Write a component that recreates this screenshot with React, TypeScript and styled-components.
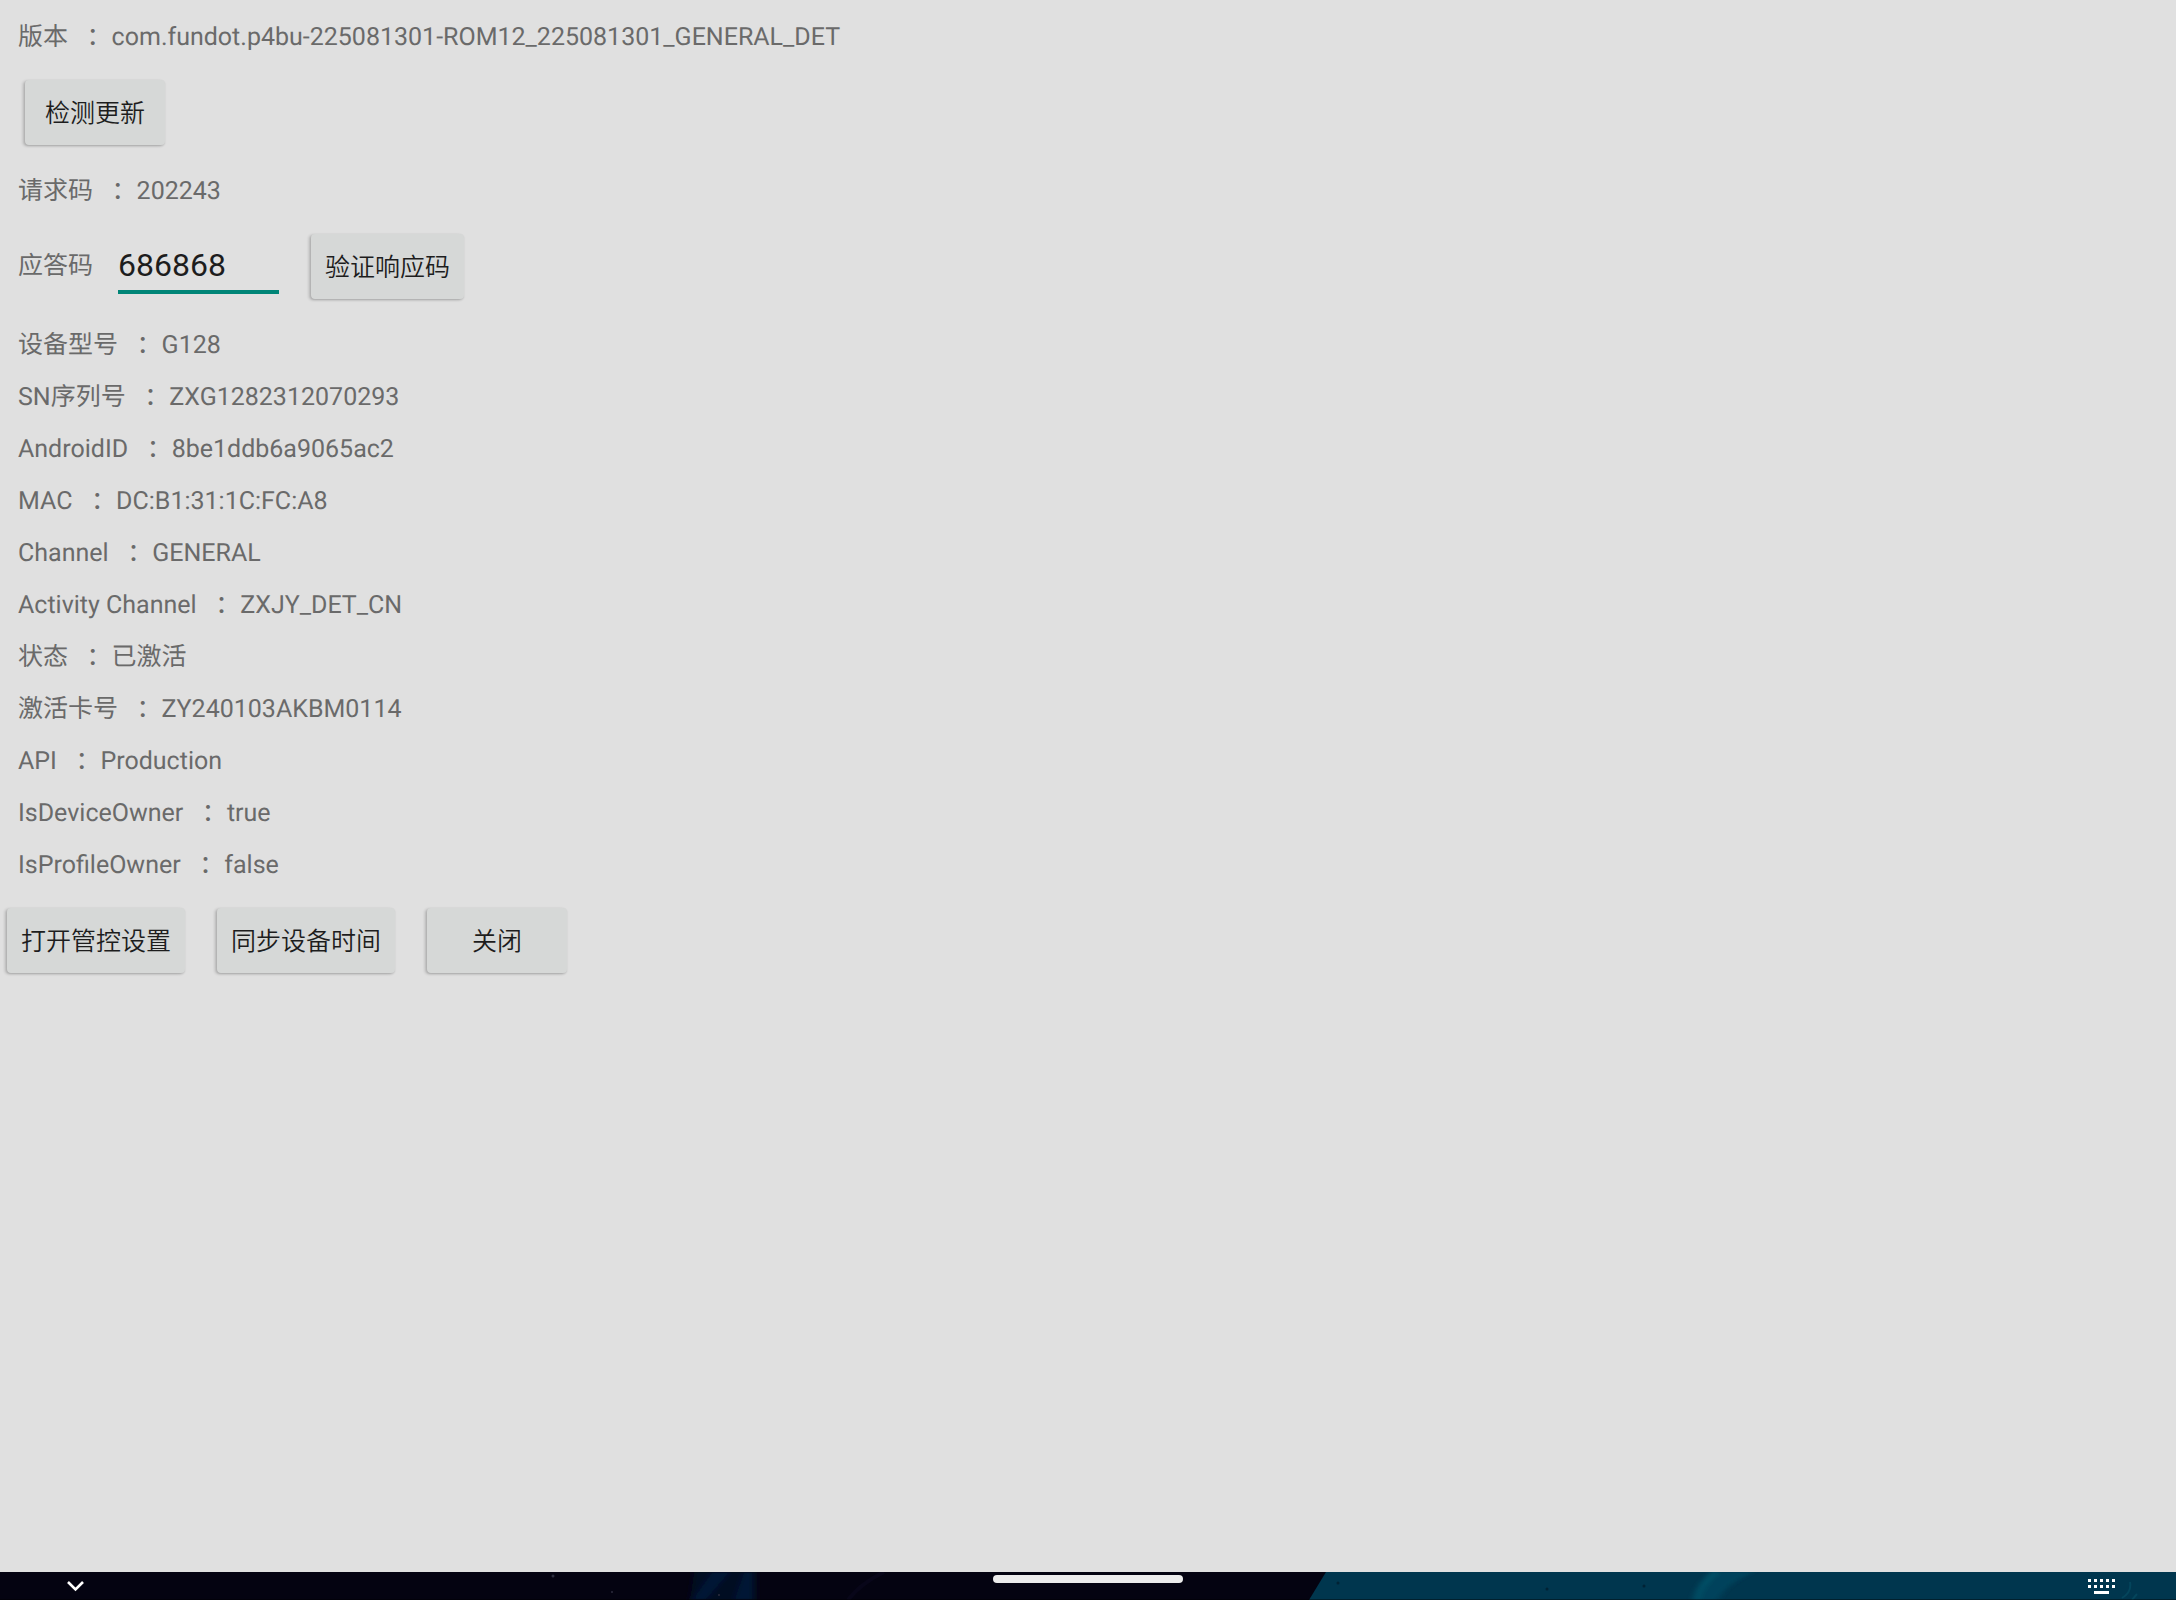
import React, { useState } from 'react';
import styled, { createGlobalStyle } from 'styled-components';

const GlobalStyle = createGlobalStyle`
  *, *::before, *::after { box-sizing: border-box; }
  body {
    margin: 0;
    background: #e0e0e0;
    color: #6a6a6a;
    font-family: Roboto, "Noto Sans CJK SC", sans-serif;
    font-size: 25px;
    line-height: 52px;
    text-rendering: geometricPrecision;
  }
`;

const Screen = styled.div`
  min-height: 100vh;
  display: flex;
  flex-direction: column;
`;

const Content = styled.main`
  flex: 1;
  padding: 12px 0;
`;

const InfoList = styled.dl`
  margin: 0;
  padding: 0 18px;
`;

const InfoRow = styled.div`
  display: flex;
  white-space: pre;
`;

const Term = styled.dt``;

const Value = styled.dd`
  margin: 0;
`;

const ControlRow = styled.div<{ $inset: number }>`
  display: flex;
  align-items: center;
  padding: 16px ${(p) => p.$inset}px 21px;
`;

const ButtonRow = styled(ControlRow)`
  gap: 32px;
`;

const Button = styled.button`
  min-width: 140px;
  height: 65px;
  padding: 2px 14px 0;
  border: 0;
  border-radius: 4px;
  background: #d6d8d7;
  color: #1d1d1d;
  font: inherit;
  font-weight: 350;
  line-height: 32px;
  box-shadow: -2px 1px 3px rgba(0, 0, 0, 0.2), 0 1px 2px rgba(0, 0, 0, 0.1);
  cursor: pointer;
`;

const CodeInput = styled.input`
  width: 161px;
  height: 55px;
  margin: 0 32px 0 25px;
  padding: 0;
  border: 0;
  border-bottom: 4px solid #008577;
  border-radius: 0;
  outline: 0;
  background: transparent;
  color: #1d1d1d;
  font: inherit;
  font-size: 32px;
  line-height: 40px;
`;

const NavBar = styled.nav`
  position: relative;
  display: grid;
  grid-template-columns: 1fr auto 1fr;
  height: 28px;
  padding: 0 60px;
  background: #040311;
`;

const Wallpaper = styled.svg`
  position: absolute;
  inset: 0;
  width: 100%;
  height: 100%;
`;

const NavButton = styled.button<{ $side: 'start' | 'end' }>`
  position: relative;
  justify-self: ${(p) => p.$side};
  display: flex;
  height: 28px;
  padding: 0;
  border: 0;
  background: transparent;
  color: #fff;
  cursor: pointer;
`;

const HomeHandle = styled.button`
  position: relative;
  width: 190px;
  height: 8px;
  margin-top: 3px;
  padding: 0;
  border: 0;
  border-radius: 4px;
  background: #ececec;
  cursor: pointer;
`;

type Info = [string, string];

const versionInfo: Info[] = [['版本', 'com.fundot.p4bu-225081301-ROM12_225081301_GENERAL_DET']];
const requestInfo: Info[] = [['请求码', '202243']];
const deviceInfo: Info[] = [
  ['设备型号', 'G128'],
  ['SN序列号', 'ZXG1282312070293'],
  ['AndroidID', '8be1ddb6a9065ac2'],
  ['MAC', 'DC:B1:31:1C:FC:A8'],
  ['Channel', 'GENERAL'],
  ['Activity Channel', 'ZXJY_DET_CN'],
  ['状态', '已激活'],
  ['激活卡号', 'ZY240103AKBM0114'],
  ['API', 'Production'],
  ['IsDeviceOwner', 'true'],
  ['IsProfileOwner', 'false'],
];

function Details({ items }: { items: Info[] }) {
  return (
    <InfoList>
      {items.map(([name, value]) => (
        <InfoRow key={name}>
          <Term>{`${name}   ：`}</Term>
          <Value>{value}</Value>
        </InfoRow>
      ))}
    </InfoList>
  );
}

function NavWallpaper() {
  return (
    <Wallpaper viewBox="0 0 2176 28" preserveAspectRatio="none" aria-hidden="true">
      <defs>
        <filter id="soft" x="-20%" y="-20%" width="140%" height="140%">
          <feGaussianBlur stdDeviation="3 1" />
        </filter>
      </defs>
      <path d="M1326 0H2176V28H1309Z" fill="#00364e" />
      <g filter="url(#soft)">
        <path d="M694 0H755V28H690Z" fill="#050b24" />
        <path d="M712 0H730L706 28H692ZM744 0H754V28H734Z" fill="#061236" />
        <path d="M1716 0H1754Q1726 12 1718 28H1694Q1700 12 1716 0Z" fill="#00435b" />
        <path d="M1716 0Q1700 12 1696 28" stroke="#004f66" strokeWidth="6" fill="none" />
      </g>
      <path d="M884 0Q860 12 848 28" stroke="#080619" strokeWidth="4" fill="none" />
      <g fill="#2c2d3e">
        <circle cx="553" cy="4" r="1.5" />
        <circle cx="612" cy="20" r="1" />
        <circle cx="719" cy="23" r="1" />
      </g>
      <g fill="#012234">
        <circle cx="1338" cy="11" r="1.5" />
        <circle cx="1547" cy="17" r="1.5" />
        <circle cx="1644" cy="14" r="1.5" />
      </g>
      <path d="M2130 10Q2132 20 2122 26M2137 22L2132 28" stroke="#04455c" strokeWidth="2" fill="none" />
      <path d="M0 27H2176V28H0Z" fill="#000" opacity="0.4" />
    </Wallpaper>
  );
}

export default function App() {
  const [code, setCode] = useState('686868');

  return (
    <Screen>
      <GlobalStyle />
      <Content>
        <Details items={versionInfo} />
        <ButtonRow $inset={25}>
          <Button type="button">检测更新</Button>
        </ButtonRow>
        <Details items={requestInfo} />
        <ControlRow $inset={18}>
          <label htmlFor="answer-code">应答码</label>
          <CodeInput
            id="answer-code"
            type="text"
            inputMode="numeric"
            value={code}
            onChange={(e) => setCode(e.target.value)}
          />
          <Button type="button">验证响应码</Button>
        </ControlRow>
        <Details items={deviceInfo} />
        <ButtonRow $inset={7}>
          <Button type="button">打开管控设置</Button>
          <Button type="button">同步设备时间</Button>
          <Button type="button">关闭</Button>
        </ButtonRow>
      </Content>
      <NavBar aria-label="系统导航">
        <NavWallpaper />
        <NavButton $side="start" type="button" aria-label="收起键盘">
          <svg width="32" height="28" viewBox="0 0 32 28" aria-hidden="true">
            <path d="M8 10L15.500 17.500L23 10" fill="none" stroke="currentColor" strokeWidth="2.600" />
          </svg>
        </NavButton>
        <HomeHandle type="button" aria-label="主屏幕" />
        <NavButton $side="end" type="button" aria-label="切换键盘">
          <svg width="28" height="28" viewBox="0 0 28 28" fill="currentColor" aria-hidden="true">
            {[0, 6, 12, 18, 24].map((x) => (
              <path key={x} d={`M${x} 7h3v3h-3zM${x} 13h3v3h-3z`} />
            ))}
            <path d="M6 19h15v3H6z" />
          </svg>
        </NavButton>
      </NavBar>
    </Screen>
  );
}
